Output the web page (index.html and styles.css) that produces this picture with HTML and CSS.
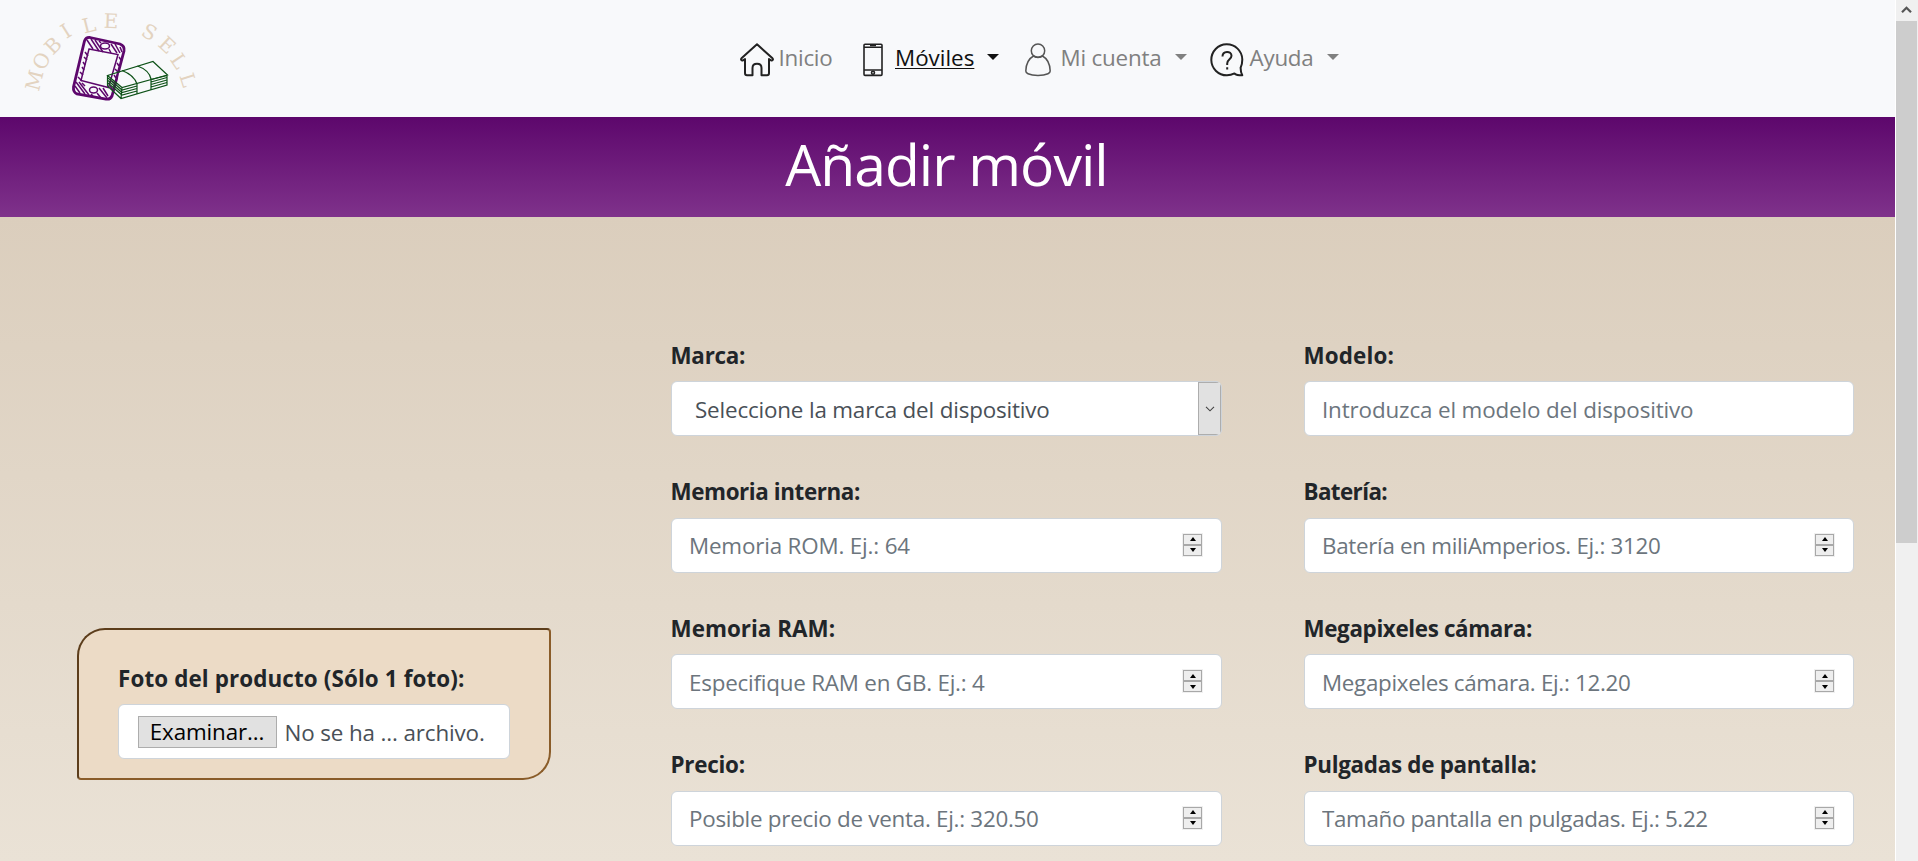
FILE: index.html
```html
<!DOCTYPE html>
<html lang="es">
<head>
<meta charset="utf-8">
<title>Añadir móvil</title>
<link rel="stylesheet" href="styles.css">
</head>
<body>
<div class="window">
<div class="page">
  <header class="navbar">
    <svg class="logo" viewBox="0 0 200 117" width="200" height="117" aria-label="Mobile Sell">
      <g class="logo-name">
        <text transform="translate(34.500 80.500) rotate(-76)" y="7">M</text>
        <text transform="translate(41.500 61) rotate(-60)" y="7">O</text>
        <text transform="translate(53 45.500) rotate(-45)" y="7">B</text>
        <text transform="translate(66 31) rotate(-32)" y="7">I</text>
        <text transform="translate(89 25) rotate(-14)" y="7">L</text>
        <text transform="translate(111 21) rotate(2)" y="7">E</text>
        <text transform="translate(149.500 32) rotate(30)" y="7">S</text>
        <text transform="translate(167 45) rotate(43)" y="7">E</text>
        <text transform="translate(179 61) rotate(56)" y="7">L</text>
        <text transform="translate(188 80) rotate(72)" y="7">L</text>
      </g>
      <g class="logo-phone">
        <path class="thick" d="M90 37.500 L120 44 Q125 46 124 51 L112 96 Q110 100 106 99 L77 94 Q73 92 73.500 87 L84.500 41 Q86 37 90 37.500Z"/>
        <path d="M89 49 L118 54.500 L108.500 87.500 L81 80.500Z"/>
        <path d="M87 40l6 9M91 39l8 12M95 40l8 12M111 44l6 9M115 44l5 9M99 41l2 2M109 49l2 4M120 47l2 5M85 52l3 4M84 57l3 3M83 62l2 3M82 67l2 3M80 72l3 3M78 77l4 4M76 82l9 12M79 82l10 13M82 83l3 3M75 86l5 7M99 88l8 10M103 88l5 8M97 93l4 5M91 94l2 2M119 57l2 3M117 63l2 3M115 69l3 3M114 75l2 3M112 81l3 3M110 86l3 4"/>
        <ellipse cx="105" cy="46" rx="4.500" ry="3"/>
        <ellipse cx="93.500" cy="90" rx="4" ry="3"/>
      </g>
      <g class="logo-cash">
        <path class="paper" d="M119 73 L153 61.500 L167.500 75 V85 L121 98.500 L116 94Z"/>
        <path d="M107.500 75.500 L153 61.500 L167.500 75 L122 87.500Z M107.500 75.500V86 L121 98.500 L167 85V75M122 87.500L121 98.500"/>
        <path d="M108 78l14 12 15-4M108 80.500l14 12 15-4M108 83l14 12 15-4M151 79.500l16-4M151 82l16-4.500M151 84.500l16-4.500M151 87l16-4.500M122 70.500Q134 75 137 84V94M137.500 66Q149 70 151 79V90"/>
      </g>
    </svg>
    <nav class="menu">
      <a class="item home" href="#"><svg width="34" height="34" viewBox="0 0 34 34"><path d="M17 1.300 1.500 15.300c-1 1.100 0 2.700 1.500 2l2-1.300V30c0 1.600.8 2.300 2 2.300h5.500V25c0-3 1.300-4.200 4.500-4.200s4.500 1.200 4.500 4.200v7.300h5.500c1.200 0 2-.7 2-2.300V16l2 1.300c1.500.7 2.500-.9 1.500-2Z"/></svg><span>Inicio</span></a>
      <a class="item phones active" href="#"><svg width="20" height="34" viewBox="0 0 20 34"><path d="M2 1.200h16q1 0 1 1v29q0 1.200-1 1.200H2q-1 0-1-1.200v-29q0-1 1-1ZM1 4.200h18M1 27h18"/><path d="M7 2.500h6"/><circle cx="10" cy="29.700" r="1.500"/></svg><span>Móviles</span><i class="caret"></i></a>
      <a class="item account" href="#"><svg width="26" height="34" viewBox="0 0 26 34"><circle cx="13" cy="7.700" r="6.700"/><path d="M8.500 13C4 15.500 1 21.500.8 28c0 1.500.7 2 2.200 2.700 5 2.300 15 2.300 20 0 1.500-.7 2.200-1.200 2.200-2.700C25 21.500 22 15.500 17.500 13q-4.500 2.500-9 0"/></svg><span>Mi cuenta</span><i class="caret"></i></a>
      <a class="item help" href="#"><svg width="34" height="34" viewBox="0 0 34 34"><path d="M32.300 16.500A15.500 15.500 0 1 0 17 32.300c3 0 5-.6 7.500-1.900q2 1.900 7.800 1.900-1.700-3-1.700-7.500c1.200-2.500 1.700-5 1.700-8.300Z"/><path d="M12.500 13.500c0-6 9-6 9-.7 0 3.600-4.300 3.400-4.300 7.700v1.500M17.200 24.300v2.200"/></svg><span>Ayuda</span><i class="caret"></i></a>
    </nav>
  </header>
  <h1 class="title">Añadir móvil</h1>
  <form class="form">
    <section class="photo">
      <label for="foto">Foto del producto (Sólo 1 foto):</label>
      <div class="control file"><button type="button" id="foto">Examinar...</button><span>No se ha ... archivo.</span></div>
    </section>
    <div class="fields">
      <div class="field brand"><label>Marca:</label><div class="control select"><span>Seleccione la marca del dispositivo</span><i class="drop"><svg width="10" height="6" viewBox="0 0 10 6"><path d="M1 .8 5 4.800 9 .8"/></svg></i></div></div>
      <div class="field model"><label>Modelo:</label><div class="control"><input type="text" placeholder="Introduzca el modelo del dispositivo"></div></div>
      <div class="field rom"><label>Memoria interna:</label><div class="control"><input type="text" placeholder="Memoria ROM. Ej.: 64"><i class="spin"><b></b><b></b></i></div></div>
      <div class="field battery"><label>Batería:</label><div class="control"><input type="text" placeholder="Batería en miliAmperios. Ej.: 3120"><i class="spin"><b></b><b></b></i></div></div>
      <div class="field ram"><label>Memoria RAM:</label><div class="control"><input type="text" placeholder="Especifique RAM en GB. Ej.: 4"><i class="spin"><b></b><b></b></i></div></div>
      <div class="field camera"><label>Megapixeles cámara:</label><div class="control"><input type="text" placeholder="Megapixeles cámara. Ej.: 12.20"><i class="spin"><b></b><b></b></i></div></div>
      <div class="field price"><label>Precio:</label><div class="control"><input type="text" placeholder="Posible precio de venta. Ej.: 320.50"><i class="spin"><b></b><b></b></i></div></div>
      <div class="field screen"><label>Pulgadas de pantalla:</label><div class="control"><input type="text" placeholder="Tamaño pantalla en pulgadas. Ej.: 5.22"><i class="spin"><b></b><b></b></i></div></div>
    </div>
  </form>
</div>
<aside class="scrollbar">
  <svg width="21" height="21" viewBox="0 0 21 21"><path d="M6 12.200 10.500 7.700 15 12.200"/></svg>
  <div class="thumb"></div>
</aside>
</div>
</body>
</html>
```
FILE: styles.css
```css
* { box-sizing: border-box; }
body {
  margin: 0;
  overflow: hidden;
  font-family: "Open Sans", sans-serif;
  font-size: 22.4px;
  line-height: 33.6px;
  color: #212529;
}
.window { display: flex; height: 861px; }
.page { flex: 1; display: flex; flex-direction: column; border-right: 1px solid #fff; }

/* Navigation */
.navbar { display: flex; height: 117px; background: #f8f9fb; }
.logo-name { font: 20px "DejaVu Serif", serif; fill: #e3d3c0; text-anchor: middle; }
.logo-phone { fill: none; stroke: #5d076c; stroke-width: 1.5; }
.logo-phone .thick { stroke-width: 2.8; }
.logo-cash { fill: none; stroke: #0e5218; stroke-width: 1.2; }
.logo-cash .paper { fill: #f8f9fb; stroke: none; }
.menu { display: flex; align-items: flex-start; padding: 42px 0 0 539.500px; }
.item {
  display: flex;
  align-items: flex-start;
  height: 35px;
  color: #808080;
  text-decoration: none;
  white-space: nowrap;
}
.item svg { margin-top: .5px; fill: none; stroke: #222; stroke-width: 2; stroke-linejoin: round; }
.item span { line-height: 31px; }
.item.active { color: #111; }
.item.active span { text-decoration: underline; text-decoration-thickness: 1px; text-underline-offset: 2px; }
.caret { border: 6px solid transparent; border-top-color: currentColor; border-bottom: 0; margin-top: 12px; }
.home { width: 123.500px; letter-spacing: -.25px; }
.home span { margin-left: 5px; }
.phones { width: 161.500px; }
.phones svg { stroke-width: 1.6; }
.phones span { margin-left: 12px; width: 79px; }
.phones .caret { margin-left: 12.500px; }
.account { width: 185px; letter-spacing: -.2px; }
.account svg { stroke: #555; stroke-width: 1.5; }
.account span { margin-left: 10px; width: 102px; }
.account .caret { margin-left: 12px; }
.help { letter-spacing: -.25px; }
.help span { margin-left: 6px; width: 64px; }
.help .caret { margin-left: 13px; }

/* Page title */
.title {
  height: 100px;
  margin: 0;
  padding-right: 2px;
  background: linear-gradient(#5d076c, #7f328b);
  color: #fff;
  font-size: 57px;
  font-weight: 400;
  line-height: 95px;
  letter-spacing: -1px;
  text-align: center;
}

/* Form */
.form {
  flex: 1;
  display: flex;
  align-items: flex-start;
  padding-left: 77px;
  background: linear-gradient(#dbcebd, #eae2d6);
}
.photo {
  width: 474px;
  height: 152px;
  margin-top: 411px;
  padding: 31px 39.500px 0 39px;
  border: 2px solid;
  border-color: #5c3d1b #8a5c29 #8a5c29 #5c3d1b;
  border-radius: 28px 4px 28px 4px;
  background: #ecdbc6;
}
label { display: block; padding-top: 1px; font-weight: 700; white-space: nowrap; }
.fields {
  display: grid;
  grid-template-columns: 551px 550px;
  column-gap: 82px;
  row-gap: 38px;
  margin: 121px 0 0 120px;
}
.field label { margin-left: -.5px; }
.control {
  display: flex;
  align-items: center;
  height: 55px;
  margin-top: 8.900px;
  padding: 0 19px 0 17px;
  border: 1px solid #ced4da;
  border-radius: 6px;
  background: #fff;
}
input {
  flex: 1;
  height: 51px;
  padding: 1px 0 0;
  border: 0;
  background: none;
  font: inherit;
  letter-spacing: inherit;
}
input::placeholder { color: #6c757d; opacity: 1; }
.select { padding: 0 0 0 23px; justify-content: space-between; color: #495057; overflow: hidden; }
.select span { padding-top: 1px; }
.drop {
  display: flex;
  align-items: center;
  justify-content: center;
  align-self: stretch;
  width: 23px;
  border: 1px solid #adadad;
  background: #e1e1e1;
}
.drop svg { fill: none; stroke: #444; stroke-width: 1.1; }
.spin { display: flex; flex-direction: column; width: 19px; margin-top: -1px; box-shadow: 0 0 0 1px #f0f0f0; }
.spin b { display: flex; justify-content: center; align-items: center; height: 11px; border: 1px solid #a8a8a8; background: #eee; }
.spin b::before { content: ""; border: 3.500px solid transparent; border-bottom: 4px solid #000; border-top: 0; }
.spin b + b::before { border-top: 4px solid #000; border-bottom: 0; }

/* Photo picker */
.photo label { letter-spacing: .12px; }
.photo .control { padding: 0 0 0 18.500px; color: #495057; letter-spacing: -.13px; white-space: nowrap; }
.file span { padding-top: 1px; }
.file button {
  width: 139px;
  height: 32px;
  margin-right: 8px;
  padding: 0;
  border: 1px solid #adadad;
  background: #e1e1e1;
  color: #000;
  font: inherit;
  line-height: 30px;
  letter-spacing: -.13px;
}

/* Letter fitting */
.brand label, .price label { letter-spacing: -.25px; }
.brand .control { letter-spacing: -.17px; }
.model label { letter-spacing: .15px; }
.model .control { letter-spacing: -.14px; }
.rom label { letter-spacing: -.4px; }
.rom .control { letter-spacing: -.17px; }
.battery label { letter-spacing: -.6px; }
.battery .control { letter-spacing: -.31px; }
.ram label { letter-spacing: .03px; }
.ram .control { letter-spacing: -.21px; }
.camera label { letter-spacing: -.36px; }
.camera .control { letter-spacing: -.32px; }
.price .control { letter-spacing: -.27px; }
.screen label { letter-spacing: -.29px; }
.screen .control { letter-spacing: -.35px; }

/* Scrollbar */
.scrollbar { width: 22px; background: #f0f0f0; }
.scrollbar svg { display: block; fill: none; stroke: #555; stroke-width: 2.200; }
.thumb { width: 21px; height: 522px; background: #cdcdcd; }
```
